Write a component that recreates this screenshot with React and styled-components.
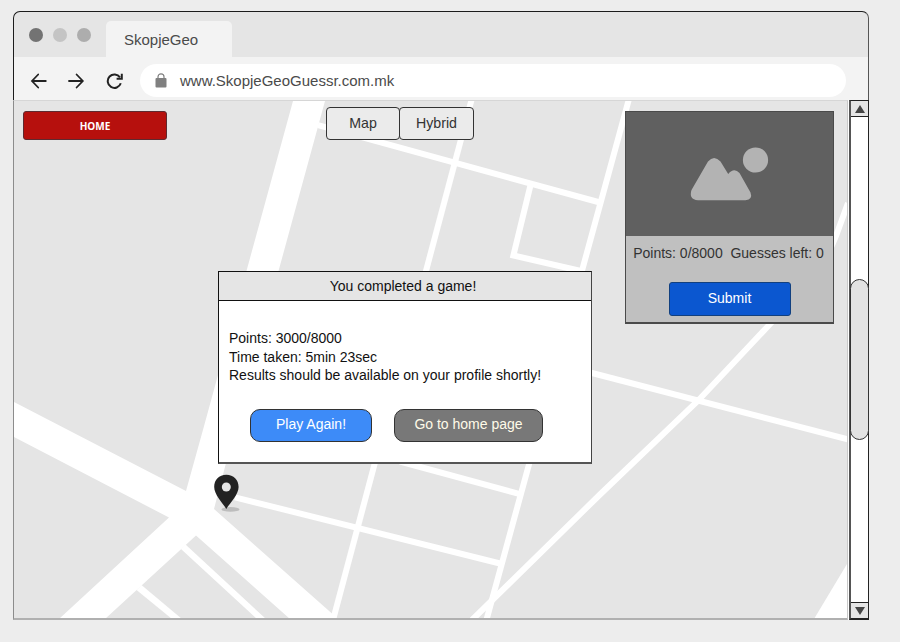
import React from "react";
import styled, { createGlobalStyle } from "styled-components";

const GlobalStyle = createGlobalStyle`
  *, *::before, *::after { box-sizing: border-box; }
  body {
    margin: 0;
    background: #ededed;
    font-family: "Liberation Sans", Arial, sans-serif;
    overflow: hidden;
  }
  button { font-family: inherit; padding: 0; margin: 0; cursor: pointer; }
`;

const Page = styled.main`
  width: 900px;
  height: 642px;
  padding: 11px 0 0 13px;
`;

const BrowserWindow = styled.div`
  width: 856px;
  height: 609px;
  display: flex;
  flex-direction: column;
`;

const Chrome = styled.header`
  height: 89px;
  flex: none;
  border: 1px solid #1c1c1c;
  border-right-color: #555;
  border-bottom: 0;
  border-radius: 7px 7px 0 0;
  background: #e5e5e5;
  overflow: hidden;
`;

const TabStrip = styled.div`
  height: 45px;
  display: flex;
  align-items: flex-end;
  padding-left: 15px;
`;

const WindowDots = styled.div`
  display: flex;
  gap: 10px;
  align-self: center;
  margin-right: 15px;
`;

const Dot = styled.span`
  width: 14px;
  height: 14px;
  border-radius: 50%;
  background: ${(p) => p.$color};
`;

const Tab = styled.div`
  width: 126px;
  height: 36px;
  padding: 0 0 0 18px;
  line-height: 38px;
  border-radius: 5px 5px 0 0;
  background: #f3f3f3;
  color: #4a4a4a;
  font-size: 15px;
`;

const AddressBar = styled.div`
  height: 43px;
  display: flex;
  align-items: center;
  padding: 3px 22px 0 16px;
  background: #f3f3f3;
`;

const NavIcons = styled.div`
  display: flex;
  gap: 20px;
  padding-top: 1px;
  margin-right: 17px;
  svg { display: block; }
`;

const UrlField = styled.div`
  flex: 1;
  height: 33px;
  display: flex;
  align-items: center;
  gap: 13px;
  padding-left: 15px;
  border-radius: 17px;
  background: #fff;
  color: #4a4a4a;
  font-size: 15px;
`;

const Viewport = styled.div`
  flex: 1;
  display: flex;
  min-height: 0;
`;

const MapArea = styled.section`
  position: relative;
  width: 835px;
  border: 1px solid #8c8c8c;
  border-top-color: #d6d6d6;
  border-right-color: #c9c9c9;
  border-bottom: 2px solid #b0b0b0;
  background: #e5e5e5;
`;

const MapDrawing = styled.svg`
  position: absolute;
  inset: 0;
  width: 100%;
  height: 100%;
`;

const Gutter = styled.div`
  width: 1px;
  background: #fff;
`;

const HomeButton = styled.button`
  position: absolute;
  left: 9px;
  top: 10px;
  width: 144px;
  height: 29px;
  border: 1px solid #5e2a30;
  border-radius: 3px;
  background: #b6100d;
  color: #fff;
  font: 700 10px/28px "Open Sans", sans-serif;
`;

const LayerSwitch = styled.div`
  position: absolute;
  left: 312px;
  top: 6px;
  display: flex;
`;

const LayerButton = styled.button`
  width: ${(p) => p.$width};
  height: 33px;
  margin-right: -1px;
  border: 1px solid #333;
  border-radius: 4px;
  background: #ebebeb;
  color: #333;
  font-size: 14.2px;
  line-height: 31px;
`;

const GuessPanel = styled.aside`
  position: absolute;
  left: 611px;
  top: 10px;
  width: 209px;
  height: 213px;
  border: 1px solid #4a4a4a;
  border-bottom-width: 2px;
  background: #c0c0c0;
  display: flex;
  flex-direction: column;
  align-items: center;
`;

const Photo = styled.div`
  width: 100%;
  height: 124px;
  background: #606060;
  svg { display: block; }
`;

const GuessStats = styled.p`
  margin: 0;
  padding: 9px 2px 0 0;
  height: 46px;
  font-size: 14px;
  line-height: 17px;
  white-space: pre;
  color: #333;
`;

const SubmitButton = styled.button`
  width: 122px;
  height: 34px;
  border: 1px solid #12407f;
  border-radius: 3px;
  background: #0b57d0;
  color: #fff;
  font-size: 14px;
  line-height: 30px;
  padding-bottom: 2px;
`;

const Dialog = styled.div`
  position: absolute;
  left: 204px;
  top: 170px;
  width: 374px;
  height: 193px;
  border: 1px solid #111;
  border-right-color: #444;
  border-bottom: 2px solid #555;
  background: #fff;
  color: #111;
  font-size: 14px;
`;

const DialogTitle = styled.h1`
  margin: 0;
  height: 29px;
  padding-right: 4px;
  border-bottom: 1px solid #111;
  background: #e5e5e5;
  font-size: 14px;
  font-weight: 400;
  line-height: 28px;
  text-align: center;
`;

const DialogText = styled.div`
  padding: 28px 10px 0;
  line-height: 18.5px;
  white-space: nowrap;
`;

const DialogActions = styled.div`
  display: flex;
  gap: 22px;
  padding: 24px 0 0 31px;
`;

const ActionButton = styled.button`
  width: ${(p) => p.$width};
  height: 33px;
  border: 1px solid #333;
  border-radius: 10px;
  background: ${(p) => p.$background};
  color: ${(p) => p.$color};
  font-size: 14px;
  line-height: 29px;
  padding-bottom: 2px;
`;

const Pin = styled.svg`
  position: absolute;
  left: 199px;
  top: 373px;
`;

const Scrollbar = styled.div`
  width: 20px;
  display: flex;
  flex-direction: column;
  border: 1px solid #222;
  border-left: 2px solid #555;
  border-bottom-width: 2px;
  background: #fff;
`;

const ScrollArrow = styled.div`
  flex: none;
  height: 16px;
  display: flex;
  align-items: center;
  justify-content: center;
  background: #e5e5e5;
  border: 0 solid #222;
  border-width: ${(p) => (p.$down ? "1px 0 0" : "0 0 1px")};
`;

const ScrollTrack = styled.div`
  flex: 1;
  display: flex;
  flex-direction: column;
  align-items: center;
  padding-top: 162px;
`;

const ScrollThumb = styled.div`
  flex: none;
  width: 19px;
  height: 161px;
  border: 1px solid #333;
  border-radius: 9.5px;
  background: #e3e3e3;
`;

const thinRoads = [
  "M235 497.3L500 563.5",
  "M471.5 100L333.3 619",
  "M318 125.2L600 202.5",
  "M628.7 100L486.7 619",
  "M530.3 186L513.4 255.4L583 271.5",
  "M400 461.5L519 493.8",
  "M590 372.5L848 439.3",
  "M472 620L600 494.5L698 400.7L771 323C810 283 826 262 836 236L848 203",
];

function CityMap() {
  return (
    <MapDrawing viewBox="14 101 833 517" preserveAspectRatio="none">
      <g fill="#fff">
        <path d="M293 101H325L226 463L214 509L332.5 614L331 619H290L196 535.5L105 619H59L169 517.5L14 437V402L186 491L203.5 428Z" />
        <path d="M185.5 544.5L266 619H257L181 549Z" />
        <path d="M141.5 585L182 619H172L136.5 590Z" />
        <path d="M847 564V619H814Z" />
      </g>
      <g fill="none" stroke="#fff" strokeWidth="6">
        {thinRoads.map((d) => (
          <path key={d} d={d} />
        ))}
      </g>
    </MapDrawing>
  );
}

function BackIcon() {
  return (
    <svg width="18" height="16" viewBox="0 0 18 16" fill="none" stroke="#222" strokeWidth="1.8" strokeLinecap="round">
      <path d="M15.800 8H2.200M8.200 1.500L2 8L8.200 14.500" />
    </svg>
  );
}

function ForwardIcon() {
  return (
    <svg width="18" height="16" viewBox="0 0 18 16" fill="none" stroke="#222" strokeWidth="1.8" strokeLinecap="round">
      <path d="M1 8H14.600M8.600 1.500L14.800 8L8.600 14.500" />
    </svg>
  );
}

function ReloadIcon() {
  return (
    <svg width="17" height="16" viewBox="0 0 17 16" fill="none" stroke="#222" strokeWidth="2">
      <path d="M14.800 10.300A6.700 6.700 0 1 1 14 4.400" />
      <path d="M15.800 .8V5.700H10.600" />
    </svg>
  );
}

function LockIcon() {
  return (
    <svg width="12" height="15" viewBox="0 0 12 15">
      <path d="M3 6V3.8A3 3 0 0 1 9 3.8V6" fill="none" stroke="#808080" strokeWidth="1.2" />
      <rect x=".5" y="5" width="11" height="9.500" rx="1" fill="#808080" />
    </svg>
  );
}

function PhotoPlaceholder() {
  return (
    <svg width="207" height="124" viewBox="626 112 207 124" fill="#b3b3b3">
      <circle cx="755.5" cy="160" r="12.6" />
      <path d="M708 161.5Q714 154.500 720.500 161.500L728.200 174Q734 167 739.500 173L750.500 192.500Q753 199.500 745.500 200.300H698Q688.500 199.500 691.500 190Z" />
    </svg>
  );
}

export default function App() {
  return (
    <>
      <GlobalStyle />
      <Page>
        <BrowserWindow>
          <Chrome>
            <TabStrip>
              <WindowDots>
                <Dot $color="#737373" />
                <Dot $color="#c4c4c4" />
                <Dot $color="#adadad" />
              </WindowDots>
              <Tab>SkopjeGeo</Tab>
            </TabStrip>
            <AddressBar>
              <NavIcons>
                <BackIcon />
                <ForwardIcon />
                <ReloadIcon />
              </NavIcons>
              <UrlField>
                <LockIcon />
                <span>www.SkopjeGeoGuessr.com.mk</span>
              </UrlField>
            </AddressBar>
          </Chrome>
          <Viewport>
            <MapArea>
              <CityMap />
              <HomeButton>HOME</HomeButton>
              <LayerSwitch>
                <LayerButton $width="74px">Map</LayerButton>
                <LayerButton $width="75px">Hybrid</LayerButton>
              </LayerSwitch>
              <GuessPanel>
                <Photo>
                  <PhotoPlaceholder />
                </Photo>
                <GuessStats>{"Points: 0/8000  Guesses left: 0"}</GuessStats>
                <SubmitButton>Submit</SubmitButton>
              </GuessPanel>
              <Pin width="28" height="38" viewBox="213 474 28 38">
                <ellipse cx="230.500" cy="509.400" rx="9" ry="2.400" fill="#bdbdbd" />
                <path
                  d="M226.300 474.800C219 474.800 214.200 480 214.200 487C214.200 494.500 222 502 226.300 509C230.600 502 238.600 494.500 238.600 487C238.600 480 233.600 474.800 226.300 474.800Z"
                  fill="#222"
                />
                <circle cx="226.300" cy="487" r="4.500" fill="#e5e5e5" />
              </Pin>
              <Dialog>
                <DialogTitle>You completed a game!</DialogTitle>
                <DialogText>
                  <div>Points: 3000/8000</div>
                  <div>Time taken: 5min 23sec</div>
                  <div>Results should be available on your profile shortly!</div>
                </DialogText>
                <DialogActions>
                  <ActionButton $width="122px" $background="#3d8bf8" $color="#fff">
                    Play Again!
                  </ActionButton>
                  <ActionButton $width="149px" $background="#787878" $color="#fffbe8">
                    Go to home page
                  </ActionButton>
                </DialogActions>
              </Dialog>
            </MapArea>
            <Gutter />
            <Scrollbar>
              <ScrollArrow>
                <svg width="10" height="8" viewBox="0 0 10 8">
                  <path d="M0 8L5 0L10 8Z" fill="#444" />
                </svg>
              </ScrollArrow>
              <ScrollTrack>
                <ScrollThumb />
              </ScrollTrack>
              <ScrollArrow $down>
                <svg width="10" height="8" viewBox="0 0 10 8">
                  <path d="M0 0H10L5 8Z" fill="#444" />
                </svg>
              </ScrollArrow>
            </Scrollbar>
          </Viewport>
        </BrowserWindow>
      </Page>
    </>
  );
}
